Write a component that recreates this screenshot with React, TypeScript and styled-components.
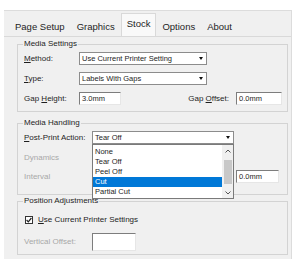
import React from "react";
import styled, { createGlobalStyle } from "styled-components";

const Global = createGlobalStyle`
  html, body { margin: 0; padding: 0; background: #ffffff; }
  body { font-family: "Liberation Sans", Arial, sans-serif; color: #1e1e1e; }
`;

const Window = styled.div`
  margin: 10px 0 0 4px;
  width: 288px;
  height: 249px;
  background: #f0f0f0;
  border-top: 1px solid #dcdcdc;
  border-right: 1px solid #dcdcdc;
  box-sizing: border-box;
  display: flex;
  flex-direction: column;
  overflow: hidden;
`;

const TabBar = styled.div`
  display: flex;
  align-items: flex-end;
  height: 25px;
  padding-left: 5px;
`;

const Tab = styled.div<{ $active?: boolean }>`
  height: ${(p) => (p.$active ? 23 : 20)}px;
  line-height: ${(p) => (p.$active ? 20 : 20)}px;
  padding: 0 ${(p) => (p.$active ? 5 : 4.5)}px;
  font-size: 9.5px;
  background: ${(p) => (p.$active ? "#f9f9f9" : "transparent")};
  border: 1px solid ${(p) => (p.$active ? "#d9d9d9" : "transparent")};
  border-bottom: none;
  margin: 0 ${(p) => (p.$active ? 0 : 0.5)}px;
  box-sizing: border-box;
  white-space: nowrap;
`;

const Panel = styled.div`
  flex: 1;
  border-top: 1px solid #d9d9d9;
  padding: 2px 0 0 13px;
  display: flex;
  flex-direction: column;
`;

const Group = styled.fieldset<{ $gap?: number }>`
  margin: ${(p) => p.$gap ?? 0}px 0 0 0;
  width: 271px;
  box-sizing: border-box;
  border: 1px solid #d3d3d3;
  padding: 0 5px 0 6px;
  display: flex;
  flex-direction: column;
  position: relative;
`;

const Legend = styled.legend`
  font-size: 8px;
  line-height: 10px;
  padding: 0 1px;
  margin-left: -1px;
`;

const Rows = styled.div<{ $top: number; $bottom: number; $gap: number }>`
  display: flex;
  flex-direction: column;
  gap: ${(p) => p.$gap}px;
  padding: ${(p) => p.$top}px 0 ${(p) => p.$bottom}px 0;
`;

const Row = styled.div`
  display: flex;
  align-items: center;
  height: 13px;
  position: relative;
`;

const Label = styled.span<{ $w?: number; $disabled?: boolean }>`
  width: ${(p) => (p.$w ? `${p.$w}px` : "auto")};
  flex-shrink: 0;
  font-size: 8px;
  white-space: nowrap;
  color: ${(p) => (p.$disabled ? "#a8a8a8" : "#1e1e1e")};
`;

const U = styled.span`
  text-decoration: underline;
  text-underline-offset: 1px;
`;

const Select = styled.div<{ $w: number }>`
  width: ${(p) => p.$w}px;
  height: 13px;
  box-sizing: border-box;
  background: #ffffff;
  border: 1px solid #8c8c8c;
  display: flex;
  align-items: center;
  padding-left: 2px;
  font-size: 7.5px;
  white-space: nowrap;
  position: relative;
`;

const Arrow = styled.span`
  position: absolute;
  right: 3px;
  top: 4px;
  width: 0;
  height: 0;
  border-left: 2.5px solid transparent;
  border-right: 2.5px solid transparent;
  border-top: 3px solid #111;
`;

const Input = styled.div<{ $w: number; $h?: number; $ml?: string; $mr?: number }>`
  width: ${(p) => p.$w}px;
  height: ${(p) => p.$h ?? 13}px;
  box-sizing: border-box;
  background: #ffffff;
  border-top: 1px solid #7d7d7d;
  border-left: 1px solid #7d7d7d;
  border-right: 1px solid #e6e6e6;
  border-bottom: 1px solid #e6e6e6;
  font-size: 7.5px;
  line-height: 11px;
  padding-left: 2px;
  margin-left: ${(p) => p.$ml ?? "0"};
  margin-right: ${(p) => p.$mr ?? 0}px;
  white-space: nowrap;
`;

const Spacer = styled.div`
  flex: 1;
`;

const List = styled.div`
  position: absolute;
  left: 68px;
  top: 13px;
  width: 142px;
  height: 55px;
  box-sizing: border-box;
  background: #ffffff;
  border: 1px solid #7a7a7a;
  display: flex;
  z-index: 2;
`;

const Items = styled.div`
  flex: 1;
  padding-top: 2px;
`;

const Item = styled.div<{ $sel?: boolean }>`
  height: 10px;
  line-height: 10px;
  font-size: 7.5px;
  padding-left: 2px;
  background: ${(p) => (p.$sel ? "#0078d7" : "transparent")};
  color: ${(p) => (p.$sel ? "#ffffff" : "#1e1e1e")};
`;

const ScrollBar = styled.div`
  width: 11px;
  background: #f0f0f0;
  display: flex;
  flex-direction: column;
  align-items: center;
`;

const ScrollBtn = styled.div`
  height: 11px;
  display: flex;
  align-items: center;
  justify-content: center;
`;

const Thumb = styled.div`
  width: 8px;
  flex: 1;
  margin: 4px 0 3px;
  background: #c8c8c8;
`;

const Check = styled.div`
  width: 8px;
  height: 8px;
  box-sizing: border-box;
  border: 1px solid #333;
  background: #fff;
  display: flex;
  align-items: center;
  justify-content: center;
  margin: 0 5px 0 1px;
`;

const Chevron = ({ up }: { up?: boolean }) => (
  <svg width="6" height="4" viewBox="0 0 6 4">
    <path
      d={up ? "M0.5 3.5 L3 1 L5.5 3.5" : "M0.5 0.5 L3 3 L5.5 0.5"}
      fill="none"
      stroke="#555"
      strokeWidth="1"
    />
  </svg>
);

export default function App() {
  return (
    <>
      <Global />
      <Window>
        <TabBar>
          <Tab>Page Setup</Tab>
          <Tab>Graphics</Tab>
          <Tab $active>Stock</Tab>
          <Tab>Options</Tab>
          <Tab>About</Tab>
        </TabBar>
        <Panel>
          <Group>
            <Legend>Media Settings</Legend>
            <Rows $top={3} $bottom={6} $gap={7}>
              <Row>
                <Label $w={55}>
                  <U>M</U>ethod:
                </Label>
                <Select $w={128}>
                  Use Current Printer Setting
                  <Arrow />
                </Select>
              </Row>
              <Row>
                <Label $w={55}>
                  <U>T</U>ype:
                </Label>
                <Select $w={128}>
                  Labels With Gaps
                  <Arrow />
                </Select>
              </Row>
              <Row>
                <Label $w={55}>
                  Gap <U>H</U>eight:
                </Label>
                <Input $w={42}>3.0mm</Input>
                <Spacer />
                <Label>
                  Gap <U>O</U>ffset:
                </Label>
                <Input $w={46} $ml="7px">
                  0.0mm
                </Input>
              </Row>
            </Rows>
          </Group>
          <Group $gap={6}>
            <Legend>Media Handling</Legend>
            <Rows $top={3} $bottom={11} $gap={6.5}>
              <Row>
                <Label $w={68}>
                  <U>P</U>ost-Print Action:
                </Label>
                <Select $w={142}>
                  Tear Off
                  <Arrow />
                </Select>
                <List>
                  <Items>
                    <Item>None</Item>
                    <Item>Tear Off</Item>
                    <Item>Peel Off</Item>
                    <Item $sel>Cut</Item>
                    <Item>Partial Cut</Item>
                  </Items>
                  <ScrollBar>
                    <ScrollBtn>
                      <Chevron up />
                    </ScrollBtn>
                    <Thumb />
                    <ScrollBtn>
                      <Chevron />
                    </ScrollBtn>
                  </ScrollBar>
                </List>
              </Row>
              <Row>
                <Label $w={68} $disabled>
                  Dynamics
                </Label>
              </Row>
              <Row>
                <Label $w={68} $disabled>
                  Interval
                </Label>
                <Spacer />
                <Input $w={43} $mr={3}>
                  0.0mm
                </Input>
              </Row>
            </Rows>
          </Group>
          <Group $gap={1}>
            <Legend>Position Adjustments</Legend>
            <Rows $top={7} $bottom={6} $gap={9}>
              <Row>
                <Check>
                  <svg width="6" height="6" viewBox="0 0 6 6">
                    <path d="M0.6 3 L2.3 4.8 L5.4 1" fill="none" stroke="#222" strokeWidth="1.2" />
                  </svg>
                </Check>
                <Label>
                  <U>U</U>se Current Printer Settings
                </Label>
              </Row>
              <Row>
                <Label $w={68} $disabled>
                  Vertical Offset:
                </Label>
                <Input $w={44} $h={18} />
              </Row>
            </Rows>
          </Group>
        </Panel>
      </Window>
    </>
  );
}
